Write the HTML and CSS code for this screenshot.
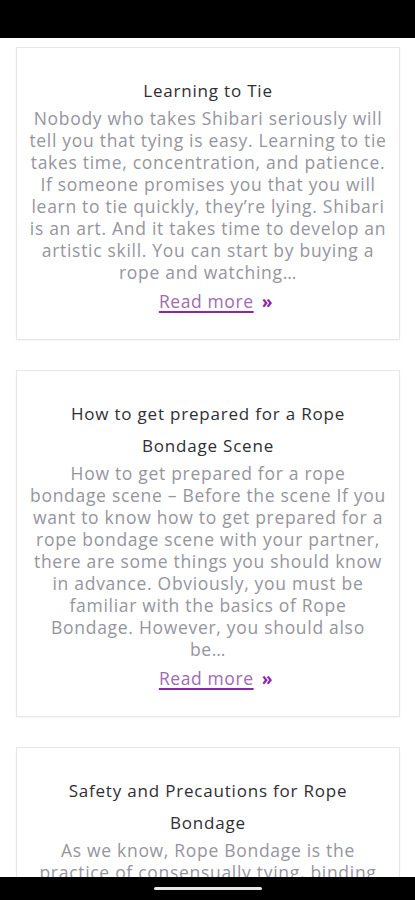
FILE: index.html
```html
<!DOCTYPE html>
<html lang="en">
<head>
    <meta charset="UTF-8">
    <meta name="viewport" content="width=device-width, initial-scale=1.0">
    <title>Shibari Blog</title>
    <link rel="stylesheet" href="styles.css">
</head>
<body>
    <div class="status-bar"></div>

    <main class="posts">
        <article class="post">
            <h2 class="post-title">Learning to Tie</h2>
            <p class="post-excerpt">
                Nobody who takes Shibari seriously will<br>
                tell you that tying is easy. Learning to tie<br>
                takes time, concentration, and patience.<br>
                If someone promises you that you will<br>
                learn to tie quickly, they’re lying. Shibari<br>
                is an art. And it takes time to develop an<br>
                artistic skill. You can start by buying a<br>
                rope and watching…
            </p>
            <p class="read-more"><a href="#">Read more</a> <span class="arrows">»</span></p>
        </article>

        <article class="post">
            <h2 class="post-title">How to get prepared for a Rope<br>Bondage Scene</h2>
            <p class="post-excerpt">
                How to get prepared for a rope<br>
                bondage scene – Before the scene If you<br>
                want to know how to get prepared for a<br>
                rope bondage scene with your partner,<br>
                there are some things you should know<br>
                in advance. Obviously, you must be<br>
                familiar with the basics of Rope<br>
                Bondage. However, you should also<br>
                be…
            </p>
            <p class="read-more"><a href="#">Read more</a> <span class="arrows">»</span></p>
        </article>

        <article class="post">
            <h2 class="post-title">Safety and Precautions for Rope<br>Bondage</h2>
            <p class="post-excerpt">
                As we know, Rope Bondage is the<br>
                practice of consensually tying, binding
            </p>
        </article>
    </main>

    <div class="nav-bar">
        <span class="home-indicator"></span>
    </div>
</body>
</html>
```

FILE: styles.css
```css
body {
    margin: 0;
    background-color: #fff;
    font-family: "Open Sans", Arial, sans-serif;
    overflow: hidden;
}
.status-bar {
    height: 38px;
    background-color: #000;
}
.posts {
    display: flex;
    flex-direction: column;
    gap: 30px;
    padding: 9px 15px 0 16px;
}
.post {
    border: 1px solid #e6e6e8;
    box-shadow: 0 1px 2px rgba(0, 0, 0, 0.04);
    padding: 27px 4px 27px;
    text-align: center;
}
.post-title {
    margin: 0;
    font-size: 17px;
    font-weight: 500;
    letter-spacing: 0.8px;
    line-height: 32px;
    color: #2e2e33;
}
.post-excerpt {
    margin: 0;
    font-size: 17.5px;
    font-weight: 400;
    letter-spacing: 0.7px;
    line-height: 22px;
    color: #95959d;
    white-space: nowrap;
}
.read-more {
    margin: 7px 0 0;
    padding-left: 16px;
    font-size: 17.5px;
    letter-spacing: 0.6px;
    line-height: 22px;
}
.read-more a {
    color: #9d6cb0;
    text-decoration: underline;
    text-decoration-color: #8e24aa;
    text-decoration-thickness: 1.5px;
    text-underline-offset: 3px;
}
.arrows {
    margin-left: 3px;
    color: #8e24aa;
    font-weight: 700;
}
.nav-bar {
    position: fixed;
    left: 0;
    right: 0;
    bottom: 0;
    height: 23px;
    background-color: #000;
    display: flex;
    justify-content: center;
    align-items: center;
}
.home-indicator {
    width: 108px;
    height: 3px;
    border-radius: 2px;
    background-color: #e8e8e8;
}
```
